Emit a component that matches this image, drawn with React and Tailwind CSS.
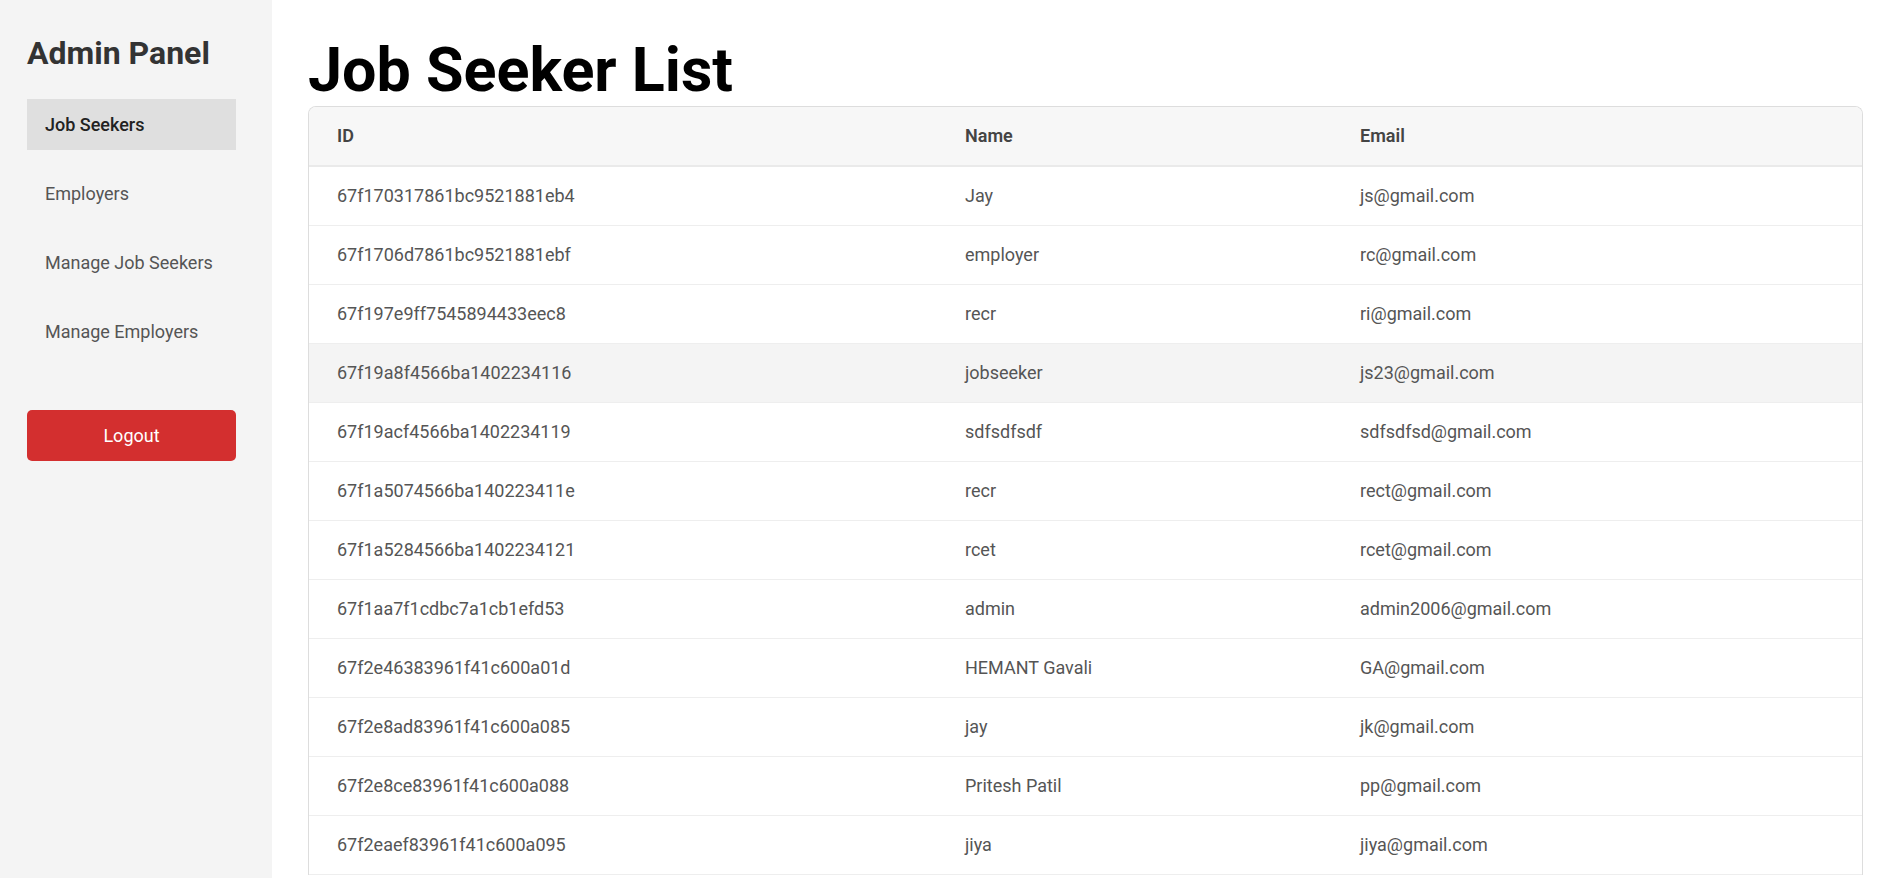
import React from "react";

const rows = [
  ["67f170317861bc9521881eb4", "Jay", "js@gmail.com"],
  ["67f1706d7861bc9521881ebf", "employer", "rc@gmail.com"],
  ["67f197e9ff7545894433eec8", "recr", "ri@gmail.com"],
  ["67f19a8f4566ba1402234116", "jobseeker", "js23@gmail.com"],
  ["67f19acf4566ba1402234119", "sdfsdfsdf", "sdfsdfsd@gmail.com"],
  ["67f1a5074566ba140223411e", "recr", "rect@gmail.com"],
  ["67f1a5284566ba1402234121", "rcet", "rcet@gmail.com"],
  ["67f1aa7f1cdbc7a1cb1efd53", "admin", "admin2006@gmail.com"],
  ["67f2e46383961f41c600a01d", "HEMANT Gavali", "GA@gmail.com"],
  ["67f2e8ad83961f41c600a085", "jay", "jk@gmail.com"],
  ["67f2e8ce83961f41c600a088", "Pritesh Patil", "pp@gmail.com"],
  ["67f2eaef83961f41c600a095", "jiya", "jiya@gmail.com"],
];

const navItems = ["Job Seekers", "Employers", "Manage Job Seekers", "Manage Employers"];

export default function App() {
  return (
    <div className="flex h-screen overflow-hidden bg-white font-['Roboto',sans-serif]">
      <aside className="w-[272px] shrink-0 bg-[#f4f4f4] pl-[27px] pr-[36px] pt-[34px]">
        <h2 className="m-0 text-[32px] leading-[38px] font-bold text-[#333]">Admin Panel</h2>
        <nav className="mt-[27px] flex flex-col gap-[18px]">
          {navItems.map((item, i) => (
            <div
              key={item}
              className={
                i === 0
                  ? "flex h-[51px] items-center bg-[#dfdfdf] pl-[18px] text-[18px] font-medium text-[#222]"
                  : "flex h-[51px] items-center pl-[18px] text-[18px] text-[#555]"
              }
            >
              {item}
            </div>
          ))}
        </nav>
        <button className="mt-[53px] flex h-[51px] w-full items-center justify-center rounded-[5px] bg-[#d32f2f] text-[18px] text-white">
          Logout
        </button>
      </aside>
      <main className="min-w-0 flex-1 pl-[36px] pr-[26px] pt-[39px]">
        <h1 className="mb-[4px] text-[61px] leading-[63px] font-bold text-black">Job Seeker List</h1>
        <div className="overflow-hidden rounded-t-lg border border-b-0 border-[#dddddd]">
          <table className="w-full table-fixed border-separate border-spacing-0 text-left">
            <colgroup>
              <col className="w-[628px]" />
              <col className="w-[395px]" />
              <col />
            </colgroup>
            <thead>
              <tr className="bg-[#f7f7f7]">
                {["ID", "Name", "Email"].map((h) => (
                  <th
                    key={h}
                    className="border-b-2 border-[#eaeaea] px-[28px] py-[18px] text-[18px] leading-[22px] font-semibold text-[#444]"
                  >
                    {h}
                  </th>
                ))}
              </tr>
            </thead>
            <tbody>
              {rows.map((r, i) => (
                <tr key={r[0]} className={i === 3 ? "bg-[#f4f4f4]" : "bg-white"}>
                  {r.map((c, j) => (
                    <td
                      key={j}
                      className="border-b border-[#eeeeee] px-[28px] py-[18px] text-[18px] leading-[22px] text-[#555]"
                    >
                      {c}
                    </td>
                  ))}
                </tr>
              ))}
            </tbody>
          </table>
        </div>
      </main>
    </div>
  );
}
